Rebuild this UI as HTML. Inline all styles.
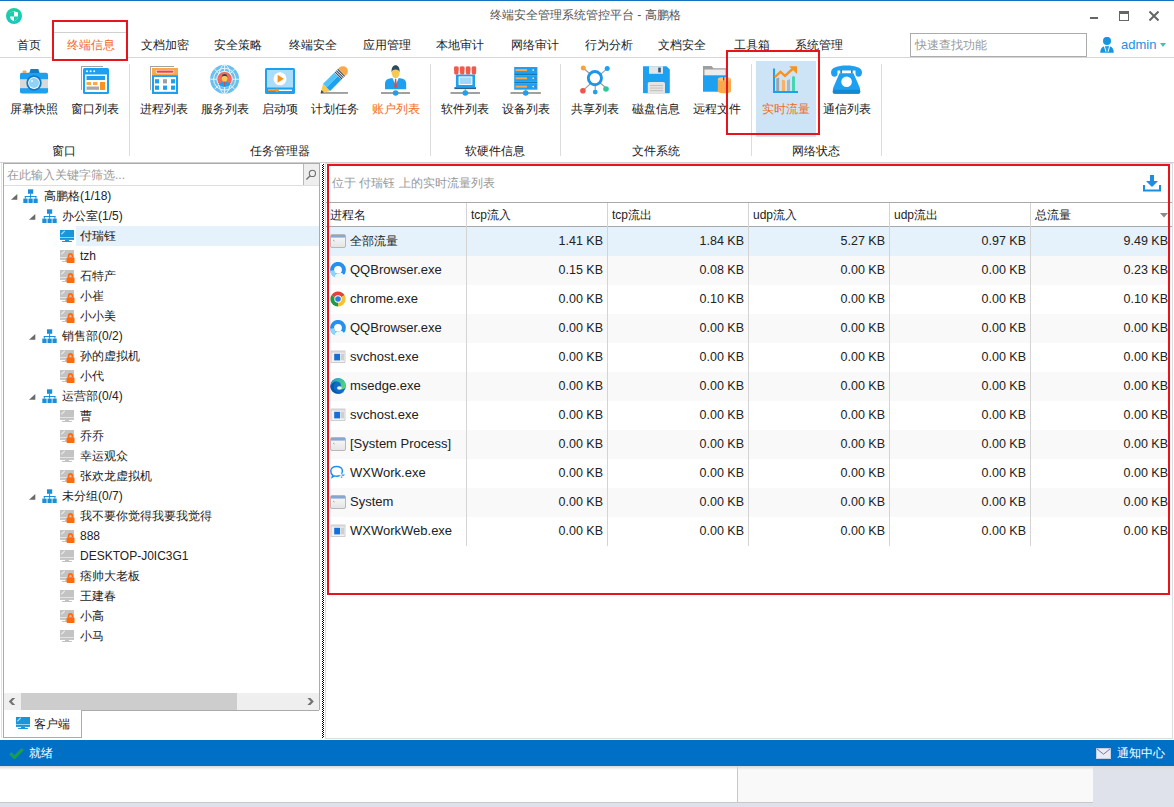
<!DOCTYPE html><html><head><meta charset="utf-8"><style>
html,body{margin:0;padding:0;}
body{width:1174px;height:807px;overflow:hidden;position:relative;background:#fff;font-family:"Liberation Sans",sans-serif;font-size:12px;color:#333;}
body>div,body>svg{position:absolute;}
.t{white-space:nowrap;line-height:16px;height:16px;}
</style></head><body>
<div style="left:0px;top:0px;width:1174px;height:1px;background:#1770c4"></div>
<svg style="left:6px;top:8px" width="16" height="16" viewBox="0 0 16 16"><defs><linearGradient id="lg" x1="0" y1="0" x2="0" y2="1"><stop offset="0" stop-color="#1ed09c"/><stop offset="1" stop-color="#19c6c4"/></linearGradient></defs><circle cx="8" cy="8" r="8" fill="url(#lg)"/><path d="M8 3.2 L12 4.4 V8.4 C12 10.8 10.2 12.4 8 13.2 C5.8 12.4 4 10.8 4 8.4 V4.4 Z" fill="#fff"/><path d="M8 3.2 V8.4 H4 V4.4Z M8 8.4 H12 C12 10.8 10.2 12.4 8 13.2Z" fill="#1ccda6"/></svg>
<div class="t" style="left:490px;top:7px;color:#555">终端安全管理系统管控平台 - 高鹏格</div>
<div style="left:1090px;top:17px;width:8px;height:2px;background:#666"></div>
<div style="left:1119px;top:11px;width:8px;height:6px;border:1px solid #666;border-top:3px solid #666"></div>
<svg style="left:1149px;top:11px" width="10" height="10" viewBox="0 0 10 10"><path d="M0.5 0.5 L9.5 9.5 M9.5 0.5 L0.5 9.5" stroke="#666" stroke-width="2"/></svg>
<div style="left:0px;top:57px;width:1174px;height:1px;background:#d6d6d6"></div>
<div style="left:53px;top:32px;width:73px;height:26px;border:1px solid #d0d0d0;border-bottom:none;background:#fff"></div>
<div class="t" style="left:17px;top:37px;color:#222">首页</div>
<div class="t" style="left:67px;top:37px;color:#f26b1d">终端信息</div>
<div class="t" style="left:141px;top:37px;color:#222">文档加密</div>
<div class="t" style="left:214px;top:37px;color:#222">安全策略</div>
<div class="t" style="left:289px;top:37px;color:#222">终端安全</div>
<div class="t" style="left:363px;top:37px;color:#222">应用管理</div>
<div class="t" style="left:436px;top:37px;color:#222">本地审计</div>
<div class="t" style="left:511px;top:37px;color:#222">网络审计</div>
<div class="t" style="left:585px;top:37px;color:#222">行为分析</div>
<div class="t" style="left:658px;top:37px;color:#222">文档安全</div>
<div class="t" style="left:734px;top:37px;color:#222">工具箱</div>
<div class="t" style="left:795px;top:37px;color:#222">系统管理</div>
<div style="left:910px;top:33px;width:175px;height:22px;border:1px solid #ababab;background:#fff"></div>
<div class="t" style="left:915px;top:37px;color:#999">快速查找功能</div>
<svg style="left:1100px;top:37px" width="15" height="16" viewBox="0 0 15 16"><circle cx="7" cy="3.9" r="4" fill="#1795de"/><path d="M0.2 15.8 C0.2 12 2 10 4.2 9.3 H9.8 C12 10 13.8 12 13.8 15.8Z" fill="#1795de"/><path d="M4.3 9 L6 14.8 M9.7 9 L8 14.8" stroke="#fff" stroke-width="1"/><rect x="6.4" y="10.4" width="1.2" height="4.2" fill="#3aa8ea"/></svg>
<div class="t" style="left:1121px;top:37px;color:#1e8fe0;font-size:13px">admin</div>
<svg style="left:1160px;top:43px" width="6" height="4" viewBox="0 0 6 4"><path d="M0 0 H6 L3 4Z" fill="#3ac4b8"/></svg>
<div style="left:129px;top:64px;width:1px;height:92px;background:#dcdcdc"></div>
<div style="left:430px;top:64px;width:1px;height:92px;background:#dcdcdc"></div>
<div style="left:560px;top:64px;width:1px;height:92px;background:#dcdcdc"></div>
<div style="left:751px;top:64px;width:1px;height:92px;background:#dcdcdc"></div>
<div style="left:881px;top:64px;width:1px;height:92px;background:#dcdcdc"></div>
<div style="left:756px;top:61px;width:60px;height:76px;background:#cde4f7"></div>
<div class="t" style="left:10px;top:101px;color:#222">屏幕快照</div>
<div class="t" style="left:71px;top:101px;color:#222">窗口列表</div>
<div class="t" style="left:140px;top:101px;color:#222">进程列表</div>
<div class="t" style="left:201px;top:101px;color:#222">服务列表</div>
<div class="t" style="left:262px;top:101px;color:#222">启动项</div>
<div class="t" style="left:311px;top:101px;color:#222">计划任务</div>
<div class="t" style="left:372px;top:101px;color:#f26b1d">账户列表</div>
<div class="t" style="left:441px;top:101px;color:#222">软件列表</div>
<div class="t" style="left:502px;top:101px;color:#222">设备列表</div>
<div class="t" style="left:571px;top:101px;color:#222">共享列表</div>
<div class="t" style="left:632px;top:101px;color:#222">磁盘信息</div>
<div class="t" style="left:693px;top:101px;color:#222">远程文件</div>
<div class="t" style="left:762px;top:101px;color:#f26b1d">实时流量</div>
<div class="t" style="left:823px;top:101px;color:#222">通信列表</div>
<div class="t" style="left:52px;top:143px;color:#222">窗口</div>
<div class="t" style="left:250px;top:143px;color:#222">任务管理器</div>
<div class="t" style="left:465px;top:143px;color:#222">软硬件信息</div>
<div class="t" style="left:632px;top:143px;color:#222">文件系统</div>
<div class="t" style="left:792px;top:143px;color:#222">网络状态</div>
<svg style="left:18px;top:64px" width="32" height="32" viewBox="0 0 32 32"><rect x="2" y="8.8" width="28" height="20.8" rx="1.8" fill="#1ea0f0"/>
<rect x="2" y="15.2" width="28" height="9" fill="#d9d9d9"/>
<path d="M11.3 8.9 L12.6 5 H20.3 L21.6 8.9Z" fill="#0e7fc6"/>
<rect x="4.5" y="6.6" width="4" height="2.4" rx="1.1" fill="#f5a55a"/>
<circle cx="16" cy="19" r="7.7" fill="#0f7cc3"/><circle cx="16" cy="19" r="5.9" fill="#fff"/><circle cx="16" cy="19" r="5" fill="#8fd3f7"/>
<circle cx="14" cy="17" r="1.1" fill="#fff" opacity=".8"/></svg>
<svg style="left:79px;top:64px" width="32" height="32" viewBox="0 0 32 32"><rect x="2" y="2" width="22" height="24" fill="#a3a3a3"/><rect x="3" y="3" width="22" height="24" fill="#fff"/>
<rect x="4" y="4" width="26" height="26" rx="1.5" fill="#1ea0f0"/>
<rect x="6" y="10.5" width="22" height="17.5" fill="#fff"/>
<circle cx="8" cy="7.2" r="1" fill="#fff"/><circle cx="11.6" cy="7.2" r="1" fill="#fff"/><circle cx="15.2" cy="7.2" r="1" fill="#fff"/>
<rect x="7.5" y="12" width="18.5" height="4" fill="#1ea0f0"/>
<rect x="7.5" y="18" width="4.5" height="3" fill="#f9a94b"/><rect x="14" y="18" width="4.5" height="3" fill="#f9a94b"/>
<rect x="21" y="18" width="5" height="8" fill="#f7931e"/>
<rect x="7.5" y="22.5" width="12.5" height="3.3" fill="#a8a8a8"/></svg>
<svg style="left:147px;top:64px" width="32" height="32" viewBox="0 0 32 32"><rect x="3" y="2" width="24" height="24" fill="#a3a3a3"/><rect x="4" y="3" width="24" height="24" fill="#fff"/>
<rect x="5" y="4" width="26" height="26" fill="#1ea0f0"/>
<rect x="5" y="4" width="26" height="7.2" fill="#f9a94b"/>
<rect x="8.7" y="5.9" width="18.6" height="3.6" rx="1.8" fill="#fff"/><rect x="9.5" y="6.6" width="17" height="2.2" rx="1.1" fill="#e8463c"/>
<rect x="7" y="13" width="22" height="14.8" fill="#fff"/>
<rect x="8" y="15.2" width="4" height="4.2" fill="#1ea0f0"/><rect x="16" y="15.2" width="4" height="4.2" fill="#a0a0a0"/><rect x="24" y="15.2" width="4" height="4.2" fill="#1ea0f0"/>
<rect x="8" y="21.6" width="4" height="4.2" fill="#1ea0f0"/><rect x="16" y="21.6" width="4" height="4.2" fill="#1ea0f0"/><rect x="24" y="21.6" width="4" height="4.2" fill="#1ea0f0"/></svg>
<svg style="left:209px;top:64px" width="32" height="32" viewBox="0 0 32 32"><circle cx="15.6" cy="15.2" r="14.5" fill="#6cbfee"/>
<g stroke="#e8f6fd" stroke-width="1" fill="none"><circle cx="15.6" cy="15.2" r="11"/><ellipse cx="15.6" cy="15.2" rx="6" ry="14.5"/>
<line x1="15.6" y1="0.7" x2="15.6" y2="29.7"/><line x1="1.1" y1="15.2" x2="30.1" y2="15.2"/>
<line x1="5.4" y1="5" x2="25.8" y2="25.4"/><line x1="25.8" y1="5" x2="5.4" y2="25.4"/></g>
<circle cx="15.6" cy="15.2" r="7.8" fill="#f26a5a" stroke="#e8f6fd" stroke-width="1"/>
<path d="M9.6 20.5 C10.6 18.6 12.6 17.8 15.6 17.8 C18.6 17.8 20.6 18.6 21.6 20.5 C20 22.2 17.9 23 15.6 23 C13.3 23 11.2 22.2 9.6 20.5Z" fill="#1ea0f0"/>
<path d="M15 17.8 H16.2 L16 22 H15.2Z" fill="#e8463c"/>
<ellipse cx="15.6" cy="14.2" rx="2.8" ry="3.4" fill="#f9c851"/>
<path d="M12.8 13.6 C12.6 10.9 14 10 15.6 10 C17.3 10 18.6 10.9 18.4 13.6 C18 12.3 17 12 15.6 12 C14.2 12 13.2 12.3 12.8 13.6Z" fill="#2e4a5e"/></svg>
<svg style="left:264px;top:64px" width="32" height="32" viewBox="0 0 32 32"><rect x="1" y="4" width="30" height="26" rx="1.5" fill="#1ea0f0"/>
<rect x="3" y="6" width="26" height="17.5" fill="#a9ddf9"/>
<circle cx="16" cy="14.8" r="6.5" fill="#fff"/>
<path d="M13.6 10.8 V18.8 L19.8 14.8Z" fill="#f7931e"/>
<rect x="4" y="25.6" width="24" height="1.4" fill="#fff"/><rect x="4" y="25.6" width="9" height="1.4" fill="#f7931e"/><circle cx="13" cy="26.3" r="1.9" fill="#f7931e"/></svg>
<svg style="left:318px;top:64px" width="32" height="32" viewBox="0 0 32 32"><rect x="3" y="28" width="27" height="1.9" fill="#a0a0a0"/>
<g transform="translate(2.6 29.4) rotate(-45)">
<path d="M0 0 L8.5 -5 V5Z" fill="#f9c851"/><path d="M0 0 L3 -1.8 V1.8Z" fill="#3a4a5a"/>
<rect x="8.5" y="-5" width="16" height="5" fill="#52c3f8"/><rect x="8.5" y="0" width="16" height="5" fill="#1ea0f0"/>
<rect x="24.5" y="-5" width="5.5" height="10" fill="#fff"/>
<rect x="24.8" y="-5" width="1.1" height="10" fill="#3a4a5a"/><rect x="26.7" y="-5" width="1.1" height="10" fill="#3a4a5a"/><rect x="28.6" y="-5" width="1.1" height="10" fill="#3a4a5a"/>
<path d="M30 -5 H31.5 A5 5 0 0 1 31.5 5 H30Z" fill="#f9a94b"/>
</g></svg>
<svg style="left:380px;top:64px" width="32" height="32" viewBox="0 0 32 32"><rect x="1" y="28" width="29" height="2" fill="#a0a0a0"/>
<path d="M5 25.3 V19.2 C5 16.3 7 15 9.8 14.4 L15.6 13.6 L21.4 14.4 C24.2 15 26.2 16.3 26.2 19.2 V25.3Z" fill="#1ea0f0"/>
<path d="M12.4 14 L15.6 21 L18.8 14Z" fill="#fff"/>
<path d="M15 14.8 H16.2 L16.9 22.5 L15.6 24.6 L14.3 22.5Z" fill="#e8463c"/>
<ellipse cx="15.6" cy="9" rx="3.9" ry="4.8" fill="#f9c851"/>
<path d="M11.6 8.4 C11.2 3.5 13.2 1.2 15.6 1.2 C18 1.2 20 3.5 19.6 8.4 C19.2 6.4 18 5.6 15.6 5.6 C13.2 5.6 12 6.4 11.6 8.4Z" fill="#2e4a5e"/>
<circle cx="15.6" cy="29" r="2.8" fill="#1ea0f0"/></svg>
<svg style="left:449px;top:64px" width="32" height="32" viewBox="0 0 32 32"><rect x="1.5" y="28" width="29.5" height="2" fill="#a0a0a0"/>
<rect x="15.8" y="24.5" width="1" height="4" fill="#a0a0a0"/>
<rect x="5.4" y="23.2" width="21.6" height="1.9" fill="#2c5f8a"/>
<rect x="6.9" y="10.5" width="19.1" height="12.8" fill="#1ea0f0"/>
<rect x="9.6" y="12.4" width="13.8" height="8.6" fill="#fff"/><rect x="10.6" y="13.4" width="11.8" height="6.6" fill="#9fd8f8"/>
<rect x="5.6" y="2.8" width="21" height="6" fill="#f3e3e3"/><rect x="5.20" y="2.6" width="4.2" height="8" rx="1.6" fill="#f05a4a"/><rect x="5.20" y="2.6" width="4.2" height="4" fill="#f05a4a"/><rect x="11.10" y="2.6" width="4.2" height="8" rx="1.6" fill="#f05a4a"/><rect x="11.10" y="2.6" width="4.2" height="4" fill="#f05a4a"/><rect x="17.00" y="2.6" width="4.2" height="8" rx="1.6" fill="#f05a4a"/><rect x="17.00" y="2.6" width="4.2" height="4" fill="#f05a4a"/><rect x="22.90" y="2.6" width="4.2" height="8" rx="1.6" fill="#f05a4a"/><rect x="22.90" y="2.6" width="4.2" height="4" fill="#f05a4a"/>
<circle cx="16.3" cy="29" r="2.8" fill="#1ea0f0"/></svg>
<svg style="left:510px;top:64px" width="32" height="32" viewBox="0 0 32 32"><rect x="0.5" y="28" width="30.4" height="2" fill="#a0a0a0"/>
<rect x="15.2" y="25.5" width="1" height="3" fill="#a0a0a0"/>
<rect x="4.2" y="3" width="23.2" height="6.2" fill="#1ea0f0"/><rect x="5.6" y="5.1" width="11.5" height="2" fill="#f9a94b"/><circle cx="23.2" cy="6.1" r="0.8" fill="#fff"/><circle cx="25.5" cy="6.1" r="0.8" fill="#e8463c"/><rect x="4.2" y="11.2" width="23.2" height="6.2" fill="#1ea0f0"/><rect x="5.6" y="13.299999999999999" width="11.5" height="2" fill="#f9a94b"/><circle cx="23.2" cy="14.299999999999999" r="0.8" fill="#fff"/><circle cx="25.5" cy="14.299999999999999" r="0.8" fill="#e8463c"/><rect x="4.2" y="19.5" width="23.2" height="6.2" fill="#1ea0f0"/><rect x="5.6" y="21.6" width="11.5" height="2" fill="#f9a94b"/><circle cx="23.2" cy="22.6" r="0.8" fill="#fff"/><circle cx="25.5" cy="22.6" r="0.8" fill="#e8463c"/><rect x="4.2" y="9.2" width="23.2" height="2" fill="#1579b8"/><rect x="4.2" y="17.4" width="23.2" height="2.1" fill="#1579b8"/>
<circle cx="15.7" cy="29" r="2.8" fill="#1ea0f0"/></svg>
<svg style="left:579px;top:64px" width="32" height="32" viewBox="0 0 32 32"><g stroke="#9a9a9a" stroke-width="1.1"><line x1="4.3" y1="4" x2="28.2" y2="25"/><line x1="28.2" y1="4.4" x2="3.9" y2="26.7"/><line x1="16.2" y1="14.1" x2="16.2" y2="28"/></g>
<circle cx="15.9" cy="14.1" r="6.6" fill="#fff" stroke="#1e96e8" stroke-width="2.9"/>
<circle cx="4.3" cy="4" r="2.5" fill="#f7a13a"/><circle cx="28.2" cy="4.4" r="2.5" fill="#1ea0f0"/>
<circle cx="3.9" cy="26.7" r="2.8" fill="#f0554a"/><circle cx="16.2" cy="28.1" r="2.4" fill="#1ea0f0"/><circle cx="27" cy="25" r="2.8" fill="#2ec89a"/></svg>
<svg style="left:640px;top:64px" width="32" height="32" viewBox="0 0 32 32"><path d="M3 2.2 H26.5 L29.8 5.5 V28.4 Q29.8 29.2 29 29.2 H3.8 Q3 29.2 3 28.4Z" fill="#1ea0f0"/>
<rect x="9" y="2.2" width="14" height="7.6" fill="#e4e4e4"/><rect x="18.2" y="3.6" width="2.6" height="4.8" fill="#3a5a78"/>
<path d="M7.8 29.2 V19.5 Q7.8 18 9.3 18 H23.5 Q25 18 25 19.5 V29.2Z" fill="#e4e4e4"/>
<rect x="10" y="21" width="13" height="0.9" fill="#bdbdbd"/><rect x="10" y="23.6" width="13" height="0.9" fill="#bdbdbd"/><rect x="10" y="26.2" width="13" height="0.9" fill="#bdbdbd"/></svg>
<svg style="left:701px;top:64px" width="32" height="32" viewBox="0 0 32 32"><path d="M2 2 H10.5 L12.5 4.2 H26 V14 H2Z" fill="#9e9e9e"/>
<rect x="3.5" y="5.5" width="21" height="8" fill="#ececec"/>
<rect x="2" y="11.3" width="24" height="16.4" fill="#1ea0f0"/>
<rect x="16.8" y="15" width="13.2" height="12.2" fill="#f9a94b"/>
<ellipse cx="23.4" cy="27.2" rx="6.6" ry="2.1" fill="#f9a94b"/>
<ellipse cx="23.4" cy="15" rx="6.6" ry="2.1" fill="#fbbf79"/>
<rect x="22" y="13" width="1.3" height="3.5" fill="#7a5a3a"/></svg>
<svg style="left:770px;top:64px" width="32" height="32" viewBox="0 0 32 32"><rect x="3" y="4.5" width="2" height="24.5" fill="#1ea0f0"/><rect x="3" y="27" width="25" height="2" fill="#1ea0f0"/>
<path d="M6.2 27 V14.6 L9.2 13.4 V27Z" fill="#9fa3a8"/><path d="M11.9 27 V15.4 L15 16.6 V27Z" fill="#fbb062"/>
<path d="M17 27 V16.4 L20 15 V27Z" fill="#a9b6c6"/><path d="M22 27 V13 L23.5 11.8 L25 13 V27Z" fill="#45d6b4"/>
<polyline points="4.8,13.2 10.5,7.8 15,11.8 22.5,5" stroke="#f7931e" stroke-width="2.4" fill="none"/>
<path d="M19.2 2.2 H27 V10Z" fill="#f7931e"/></svg>
<svg style="left:830px;top:64px" width="34" height="32" viewBox="0 0 34 32"><path d="M1 8.5 C1 3.5 7.5 1.5 16.5 1.5 C25.5 1.5 32 3.5 32 8.5 C32 11.2 30.5 12.8 28.5 12.8 C26.5 12.8 25.5 11.2 25.5 9.5 V6.4 H7.5 V9.5 C7.5 11.2 6.5 12.8 4.5 12.8 C2.5 12.8 1 11.2 1 8.5Z" fill="#1ea0f0"/>
<rect x="10.4" y="6" width="1.5" height="3.6" fill="#1579b8"/><rect x="21.1" y="6" width="1.5" height="3.6" fill="#1579b8"/>
<path d="M9.5 9.3 H23.5 L29.5 23 C30.5 25.5 30.5 29.7 28.5 29.7 H4.5 C2.5 29.7 2.5 25.5 3.5 23Z" fill="#1ea0f0"/>
<rect x="2.6" y="25.7" width="27.8" height="4" rx="2" fill="#1488d0"/>
<circle cx="16.6" cy="17.7" r="5.3" fill="#fff"/></svg>
<div style="left:0px;top:162px;width:1174px;height:1px;background:#d0d0d0"></div>
<div style="left:1px;top:163px;width:1px;height:575px;background:#e2e2e2"></div>
<div style="left:3px;top:163px;width:316px;height:547px;border-left:1px solid #ababab;border-top:1px solid #ababab;border-right:1px solid #ababab;border-bottom:1px solid #ababab;box-sizing:border-box;width:317px"></div>
<div style="left:4px;top:185px;width:315px;height:1px;background:#dedede"></div>
<div class="t" style="left:7px;top:167px;color:#999">在此输入关键字筛选...</div>
<div style="left:303px;top:164px;width:16px;height:21px;background:#eeeeee;border-left:1px solid #b8b8b8;box-sizing:border-box"></div>
<svg style="left:305px;top:167px" width="13" height="14" viewBox="0 0 13 14"><circle cx="7.4" cy="6.4" r="3.1" stroke="#707070" stroke-width="1.1" fill="none"/><line x1="5.2" y1="8.7" x2="1.4" y2="12.5" stroke="#707070" stroke-width="1.3"/></svg>
<svg style="left:11px;top:194px" width="7" height="6" viewBox="0 0 7 6"><path d="M6.3 0 V5.8 H0Z" fill="#6a6a6a"/></svg>
<svg style="left:23.0px;top:189px" width="15" height="14" viewBox="0 0 15 14"><rect x="5" y="0.3" width="5.2" height="4.5" fill="#1a8fd8"/><rect x="7.1" y="4.8" width="1" height="2.4" fill="#1a8fd8"/><rect x="1.8" y="7" width="11.6" height="1" fill="#1a8fd8"/><rect x="1.8" y="7" width="1" height="2.6" fill="#1a8fd8"/><rect x="7.1" y="7" width="1" height="2.6" fill="#1a8fd8"/><rect x="12.4" y="7" width="1" height="2.6" fill="#1a8fd8"/><rect x="0.3" y="9.6" width="4.3" height="4.4" fill="#1a8fd8"/><rect x="5.5" y="9.6" width="4.2" height="4.4" fill="#1a8fd8"/><rect x="10.5" y="9.6" width="4.2" height="4.4" fill="#1a8fd8"/></svg>
<div class="t" style="left:44px;top:188px;color:#222">高鹏格(1/18)</div>
<svg style="left:29px;top:214px" width="7" height="6" viewBox="0 0 7 6"><path d="M6.3 0 V5.8 H0Z" fill="#6a6a6a"/></svg>
<svg style="left:41.5px;top:209px" width="15" height="14" viewBox="0 0 15 14"><rect x="5" y="0.3" width="5.2" height="4.5" fill="#1a8fd8"/><rect x="7.1" y="4.8" width="1" height="2.4" fill="#1a8fd8"/><rect x="1.8" y="7" width="11.6" height="1" fill="#1a8fd8"/><rect x="1.8" y="7" width="1" height="2.6" fill="#1a8fd8"/><rect x="7.1" y="7" width="1" height="2.6" fill="#1a8fd8"/><rect x="12.4" y="7" width="1" height="2.6" fill="#1a8fd8"/><rect x="0.3" y="9.6" width="4.3" height="4.4" fill="#1a8fd8"/><rect x="5.5" y="9.6" width="4.2" height="4.4" fill="#1a8fd8"/><rect x="10.5" y="9.6" width="4.2" height="4.4" fill="#1a8fd8"/></svg>
<div class="t" style="left:62px;top:208px;color:#222">办公室(1/5)</div>
<div style="left:76px;top:226px;width:243px;height:20px;background:#e5f1fb"></div>
<svg style="left:60px;top:230px" width="14" height="13" viewBox="0 0 14 13"><rect x="0" y="0" width="14" height="7" fill="#1995dc"/><rect x="0" y="7" width="14" height="1" fill="#1995dc" opacity=".45"/><rect x="0" y="8" width="14" height="1.9" fill="#1995dc"/><rect x="5" y="9.8" width="4" height="1.2" fill="#1995dc"/><rect x="2" y="10.9" width="10" height="1.1" rx="0.5" fill="#1995dc"/><path d="M1.6 3.9 L4.4 1.3" stroke="#fff" stroke-width="1.3" stroke-linecap="round" opacity=".6"/></svg>
<div class="t" style="left:80px;top:228px;color:#222">付瑞钰</div>
<svg style="left:60px;top:250px" width="16" height="18" viewBox="0 0 16 18"><rect x="0" y="0" width="14" height="7" fill="#c3c3c3"/><rect x="0" y="7" width="14" height="1" fill="#c3c3c3" opacity=".45"/><rect x="0" y="8" width="14" height="1.9" fill="#c3c3c3"/><rect x="5" y="9.8" width="4" height="1.2" fill="#c3c3c3"/><rect x="2" y="10.9" width="10" height="1.1" rx="0.5" fill="#c3c3c3"/><path d="M1.6 3.9 L4.4 1.3" stroke="#fff" stroke-width="1.3" stroke-linecap="round" opacity=".6"/><path d="M8.6 7.4 V6.2 C8.6 4.7 9.4 3.9 10.5 3.9 C11.6 3.9 12.4 4.7 12.4 6.2 V7.4" stroke="#ff6a0d" stroke-width="1.6" fill="none"/><rect x="6.6" y="7.3" width="7.9" height="5.8" rx="1.2" fill="#ff6a0d"/></svg>
<div class="t" style="left:80px;top:248px;color:#222">tzh</div>
<svg style="left:60px;top:270px" width="16" height="18" viewBox="0 0 16 18"><rect x="0" y="0" width="14" height="7" fill="#c3c3c3"/><rect x="0" y="7" width="14" height="1" fill="#c3c3c3" opacity=".45"/><rect x="0" y="8" width="14" height="1.9" fill="#c3c3c3"/><rect x="5" y="9.8" width="4" height="1.2" fill="#c3c3c3"/><rect x="2" y="10.9" width="10" height="1.1" rx="0.5" fill="#c3c3c3"/><path d="M1.6 3.9 L4.4 1.3" stroke="#fff" stroke-width="1.3" stroke-linecap="round" opacity=".6"/><path d="M8.6 7.4 V6.2 C8.6 4.7 9.4 3.9 10.5 3.9 C11.6 3.9 12.4 4.7 12.4 6.2 V7.4" stroke="#ff6a0d" stroke-width="1.6" fill="none"/><rect x="6.6" y="7.3" width="7.9" height="5.8" rx="1.2" fill="#ff6a0d"/></svg>
<div class="t" style="left:80px;top:268px;color:#222">石特产</div>
<svg style="left:60px;top:290px" width="16" height="18" viewBox="0 0 16 18"><rect x="0" y="0" width="14" height="7" fill="#c3c3c3"/><rect x="0" y="7" width="14" height="1" fill="#c3c3c3" opacity=".45"/><rect x="0" y="8" width="14" height="1.9" fill="#c3c3c3"/><rect x="5" y="9.8" width="4" height="1.2" fill="#c3c3c3"/><rect x="2" y="10.9" width="10" height="1.1" rx="0.5" fill="#c3c3c3"/><path d="M1.6 3.9 L4.4 1.3" stroke="#fff" stroke-width="1.3" stroke-linecap="round" opacity=".6"/><path d="M8.6 7.4 V6.2 C8.6 4.7 9.4 3.9 10.5 3.9 C11.6 3.9 12.4 4.7 12.4 6.2 V7.4" stroke="#ff6a0d" stroke-width="1.6" fill="none"/><rect x="6.6" y="7.3" width="7.9" height="5.8" rx="1.2" fill="#ff6a0d"/></svg>
<div class="t" style="left:80px;top:288px;color:#222">小崔</div>
<svg style="left:60px;top:310px" width="16" height="18" viewBox="0 0 16 18"><rect x="0" y="0" width="14" height="7" fill="#c3c3c3"/><rect x="0" y="7" width="14" height="1" fill="#c3c3c3" opacity=".45"/><rect x="0" y="8" width="14" height="1.9" fill="#c3c3c3"/><rect x="5" y="9.8" width="4" height="1.2" fill="#c3c3c3"/><rect x="2" y="10.9" width="10" height="1.1" rx="0.5" fill="#c3c3c3"/><path d="M1.6 3.9 L4.4 1.3" stroke="#fff" stroke-width="1.3" stroke-linecap="round" opacity=".6"/><path d="M8.6 7.4 V6.2 C8.6 4.7 9.4 3.9 10.5 3.9 C11.6 3.9 12.4 4.7 12.4 6.2 V7.4" stroke="#ff6a0d" stroke-width="1.6" fill="none"/><rect x="6.6" y="7.3" width="7.9" height="5.8" rx="1.2" fill="#ff6a0d"/></svg>
<div class="t" style="left:80px;top:308px;color:#222">小小美</div>
<svg style="left:29px;top:334px" width="7" height="6" viewBox="0 0 7 6"><path d="M6.3 0 V5.8 H0Z" fill="#6a6a6a"/></svg>
<svg style="left:41.5px;top:329px" width="15" height="14" viewBox="0 0 15 14"><rect x="5" y="0.3" width="5.2" height="4.5" fill="#1a8fd8"/><rect x="7.1" y="4.8" width="1" height="2.4" fill="#1a8fd8"/><rect x="1.8" y="7" width="11.6" height="1" fill="#1a8fd8"/><rect x="1.8" y="7" width="1" height="2.6" fill="#1a8fd8"/><rect x="7.1" y="7" width="1" height="2.6" fill="#1a8fd8"/><rect x="12.4" y="7" width="1" height="2.6" fill="#1a8fd8"/><rect x="0.3" y="9.6" width="4.3" height="4.4" fill="#1a8fd8"/><rect x="5.5" y="9.6" width="4.2" height="4.4" fill="#1a8fd8"/><rect x="10.5" y="9.6" width="4.2" height="4.4" fill="#1a8fd8"/></svg>
<div class="t" style="left:62px;top:328px;color:#222">销售部(0/2)</div>
<svg style="left:60px;top:350px" width="16" height="18" viewBox="0 0 16 18"><rect x="0" y="0" width="14" height="7" fill="#c3c3c3"/><rect x="0" y="7" width="14" height="1" fill="#c3c3c3" opacity=".45"/><rect x="0" y="8" width="14" height="1.9" fill="#c3c3c3"/><rect x="5" y="9.8" width="4" height="1.2" fill="#c3c3c3"/><rect x="2" y="10.9" width="10" height="1.1" rx="0.5" fill="#c3c3c3"/><path d="M1.6 3.9 L4.4 1.3" stroke="#fff" stroke-width="1.3" stroke-linecap="round" opacity=".6"/><path d="M8.6 7.4 V6.2 C8.6 4.7 9.4 3.9 10.5 3.9 C11.6 3.9 12.4 4.7 12.4 6.2 V7.4" stroke="#ff6a0d" stroke-width="1.6" fill="none"/><rect x="6.6" y="7.3" width="7.9" height="5.8" rx="1.2" fill="#ff6a0d"/></svg>
<div class="t" style="left:80px;top:348px;color:#222">孙的虚拟机</div>
<svg style="left:60px;top:370px" width="16" height="18" viewBox="0 0 16 18"><rect x="0" y="0" width="14" height="7" fill="#c3c3c3"/><rect x="0" y="7" width="14" height="1" fill="#c3c3c3" opacity=".45"/><rect x="0" y="8" width="14" height="1.9" fill="#c3c3c3"/><rect x="5" y="9.8" width="4" height="1.2" fill="#c3c3c3"/><rect x="2" y="10.9" width="10" height="1.1" rx="0.5" fill="#c3c3c3"/><path d="M1.6 3.9 L4.4 1.3" stroke="#fff" stroke-width="1.3" stroke-linecap="round" opacity=".6"/><path d="M8.6 7.4 V6.2 C8.6 4.7 9.4 3.9 10.5 3.9 C11.6 3.9 12.4 4.7 12.4 6.2 V7.4" stroke="#ff6a0d" stroke-width="1.6" fill="none"/><rect x="6.6" y="7.3" width="7.9" height="5.8" rx="1.2" fill="#ff6a0d"/></svg>
<div class="t" style="left:80px;top:368px;color:#222">小代</div>
<svg style="left:29px;top:394px" width="7" height="6" viewBox="0 0 7 6"><path d="M6.3 0 V5.8 H0Z" fill="#6a6a6a"/></svg>
<svg style="left:41.5px;top:389px" width="15" height="14" viewBox="0 0 15 14"><rect x="5" y="0.3" width="5.2" height="4.5" fill="#1a8fd8"/><rect x="7.1" y="4.8" width="1" height="2.4" fill="#1a8fd8"/><rect x="1.8" y="7" width="11.6" height="1" fill="#1a8fd8"/><rect x="1.8" y="7" width="1" height="2.6" fill="#1a8fd8"/><rect x="7.1" y="7" width="1" height="2.6" fill="#1a8fd8"/><rect x="12.4" y="7" width="1" height="2.6" fill="#1a8fd8"/><rect x="0.3" y="9.6" width="4.3" height="4.4" fill="#1a8fd8"/><rect x="5.5" y="9.6" width="4.2" height="4.4" fill="#1a8fd8"/><rect x="10.5" y="9.6" width="4.2" height="4.4" fill="#1a8fd8"/></svg>
<div class="t" style="left:62px;top:388px;color:#222">运营部(0/4)</div>
<svg style="left:60px;top:410px" width="16" height="18" viewBox="0 0 16 18"><rect x="0" y="0" width="14" height="7" fill="#c3c3c3"/><rect x="0" y="7" width="14" height="1" fill="#c3c3c3" opacity=".45"/><rect x="0" y="8" width="14" height="1.9" fill="#c3c3c3"/><rect x="5" y="9.8" width="4" height="1.2" fill="#c3c3c3"/><rect x="2" y="10.9" width="10" height="1.1" rx="0.5" fill="#c3c3c3"/><path d="M1.6 3.9 L4.4 1.3" stroke="#fff" stroke-width="1.3" stroke-linecap="round" opacity=".6"/></svg>
<div class="t" style="left:80px;top:408px;color:#222">曹</div>
<svg style="left:60px;top:430px" width="16" height="18" viewBox="0 0 16 18"><rect x="0" y="0" width="14" height="7" fill="#c3c3c3"/><rect x="0" y="7" width="14" height="1" fill="#c3c3c3" opacity=".45"/><rect x="0" y="8" width="14" height="1.9" fill="#c3c3c3"/><rect x="5" y="9.8" width="4" height="1.2" fill="#c3c3c3"/><rect x="2" y="10.9" width="10" height="1.1" rx="0.5" fill="#c3c3c3"/><path d="M1.6 3.9 L4.4 1.3" stroke="#fff" stroke-width="1.3" stroke-linecap="round" opacity=".6"/><path d="M8.6 7.4 V6.2 C8.6 4.7 9.4 3.9 10.5 3.9 C11.6 3.9 12.4 4.7 12.4 6.2 V7.4" stroke="#ff6a0d" stroke-width="1.6" fill="none"/><rect x="6.6" y="7.3" width="7.9" height="5.8" rx="1.2" fill="#ff6a0d"/></svg>
<div class="t" style="left:80px;top:428px;color:#222">乔乔</div>
<svg style="left:60px;top:450px" width="16" height="18" viewBox="0 0 16 18"><rect x="0" y="0" width="14" height="7" fill="#c3c3c3"/><rect x="0" y="7" width="14" height="1" fill="#c3c3c3" opacity=".45"/><rect x="0" y="8" width="14" height="1.9" fill="#c3c3c3"/><rect x="5" y="9.8" width="4" height="1.2" fill="#c3c3c3"/><rect x="2" y="10.9" width="10" height="1.1" rx="0.5" fill="#c3c3c3"/><path d="M1.6 3.9 L4.4 1.3" stroke="#fff" stroke-width="1.3" stroke-linecap="round" opacity=".6"/></svg>
<div class="t" style="left:80px;top:448px;color:#222">幸运观众</div>
<svg style="left:60px;top:470px" width="16" height="18" viewBox="0 0 16 18"><rect x="0" y="0" width="14" height="7" fill="#c3c3c3"/><rect x="0" y="7" width="14" height="1" fill="#c3c3c3" opacity=".45"/><rect x="0" y="8" width="14" height="1.9" fill="#c3c3c3"/><rect x="5" y="9.8" width="4" height="1.2" fill="#c3c3c3"/><rect x="2" y="10.9" width="10" height="1.1" rx="0.5" fill="#c3c3c3"/><path d="M1.6 3.9 L4.4 1.3" stroke="#fff" stroke-width="1.3" stroke-linecap="round" opacity=".6"/><path d="M8.6 7.4 V6.2 C8.6 4.7 9.4 3.9 10.5 3.9 C11.6 3.9 12.4 4.7 12.4 6.2 V7.4" stroke="#ff6a0d" stroke-width="1.6" fill="none"/><rect x="6.6" y="7.3" width="7.9" height="5.8" rx="1.2" fill="#ff6a0d"/></svg>
<div class="t" style="left:80px;top:468px;color:#222">张欢龙虚拟机</div>
<svg style="left:29px;top:494px" width="7" height="6" viewBox="0 0 7 6"><path d="M6.3 0 V5.8 H0Z" fill="#6a6a6a"/></svg>
<svg style="left:41.5px;top:489px" width="15" height="14" viewBox="0 0 15 14"><rect x="5" y="0.3" width="5.2" height="4.5" fill="#1a8fd8"/><rect x="7.1" y="4.8" width="1" height="2.4" fill="#1a8fd8"/><rect x="1.8" y="7" width="11.6" height="1" fill="#1a8fd8"/><rect x="1.8" y="7" width="1" height="2.6" fill="#1a8fd8"/><rect x="7.1" y="7" width="1" height="2.6" fill="#1a8fd8"/><rect x="12.4" y="7" width="1" height="2.6" fill="#1a8fd8"/><rect x="0.3" y="9.6" width="4.3" height="4.4" fill="#1a8fd8"/><rect x="5.5" y="9.6" width="4.2" height="4.4" fill="#1a8fd8"/><rect x="10.5" y="9.6" width="4.2" height="4.4" fill="#1a8fd8"/></svg>
<div class="t" style="left:62px;top:488px;color:#222">未分组(0/7)</div>
<svg style="left:60px;top:510px" width="16" height="18" viewBox="0 0 16 18"><rect x="0" y="0" width="14" height="7" fill="#c3c3c3"/><rect x="0" y="7" width="14" height="1" fill="#c3c3c3" opacity=".45"/><rect x="0" y="8" width="14" height="1.9" fill="#c3c3c3"/><rect x="5" y="9.8" width="4" height="1.2" fill="#c3c3c3"/><rect x="2" y="10.9" width="10" height="1.1" rx="0.5" fill="#c3c3c3"/><path d="M1.6 3.9 L4.4 1.3" stroke="#fff" stroke-width="1.3" stroke-linecap="round" opacity=".6"/><path d="M8.6 7.4 V6.2 C8.6 4.7 9.4 3.9 10.5 3.9 C11.6 3.9 12.4 4.7 12.4 6.2 V7.4" stroke="#ff6a0d" stroke-width="1.6" fill="none"/><rect x="6.6" y="7.3" width="7.9" height="5.8" rx="1.2" fill="#ff6a0d"/></svg>
<div class="t" style="left:80px;top:508px;color:#222">我不要你觉得我要我觉得</div>
<svg style="left:60px;top:530px" width="16" height="18" viewBox="0 0 16 18"><rect x="0" y="0" width="14" height="7" fill="#c3c3c3"/><rect x="0" y="7" width="14" height="1" fill="#c3c3c3" opacity=".45"/><rect x="0" y="8" width="14" height="1.9" fill="#c3c3c3"/><rect x="5" y="9.8" width="4" height="1.2" fill="#c3c3c3"/><rect x="2" y="10.9" width="10" height="1.1" rx="0.5" fill="#c3c3c3"/><path d="M1.6 3.9 L4.4 1.3" stroke="#fff" stroke-width="1.3" stroke-linecap="round" opacity=".6"/><path d="M8.6 7.4 V6.2 C8.6 4.7 9.4 3.9 10.5 3.9 C11.6 3.9 12.4 4.7 12.4 6.2 V7.4" stroke="#ff6a0d" stroke-width="1.6" fill="none"/><rect x="6.6" y="7.3" width="7.9" height="5.8" rx="1.2" fill="#ff6a0d"/></svg>
<div class="t" style="left:80px;top:528px;color:#222">888</div>
<svg style="left:60px;top:550px" width="16" height="18" viewBox="0 0 16 18"><rect x="0" y="0" width="14" height="7" fill="#c3c3c3"/><rect x="0" y="7" width="14" height="1" fill="#c3c3c3" opacity=".45"/><rect x="0" y="8" width="14" height="1.9" fill="#c3c3c3"/><rect x="5" y="9.8" width="4" height="1.2" fill="#c3c3c3"/><rect x="2" y="10.9" width="10" height="1.1" rx="0.5" fill="#c3c3c3"/><path d="M1.6 3.9 L4.4 1.3" stroke="#fff" stroke-width="1.3" stroke-linecap="round" opacity=".6"/></svg>
<div class="t" style="left:80px;top:548px;color:#222">DESKTOP-J0IC3G1</div>
<svg style="left:60px;top:570px" width="16" height="18" viewBox="0 0 16 18"><rect x="0" y="0" width="14" height="7" fill="#c3c3c3"/><rect x="0" y="7" width="14" height="1" fill="#c3c3c3" opacity=".45"/><rect x="0" y="8" width="14" height="1.9" fill="#c3c3c3"/><rect x="5" y="9.8" width="4" height="1.2" fill="#c3c3c3"/><rect x="2" y="10.9" width="10" height="1.1" rx="0.5" fill="#c3c3c3"/><path d="M1.6 3.9 L4.4 1.3" stroke="#fff" stroke-width="1.3" stroke-linecap="round" opacity=".6"/><path d="M8.6 7.4 V6.2 C8.6 4.7 9.4 3.9 10.5 3.9 C11.6 3.9 12.4 4.7 12.4 6.2 V7.4" stroke="#ff6a0d" stroke-width="1.6" fill="none"/><rect x="6.6" y="7.3" width="7.9" height="5.8" rx="1.2" fill="#ff6a0d"/></svg>
<div class="t" style="left:80px;top:568px;color:#222">痞帅大老板</div>
<svg style="left:60px;top:590px" width="16" height="18" viewBox="0 0 16 18"><rect x="0" y="0" width="14" height="7" fill="#c3c3c3"/><rect x="0" y="7" width="14" height="1" fill="#c3c3c3" opacity=".45"/><rect x="0" y="8" width="14" height="1.9" fill="#c3c3c3"/><rect x="5" y="9.8" width="4" height="1.2" fill="#c3c3c3"/><rect x="2" y="10.9" width="10" height="1.1" rx="0.5" fill="#c3c3c3"/><path d="M1.6 3.9 L4.4 1.3" stroke="#fff" stroke-width="1.3" stroke-linecap="round" opacity=".6"/></svg>
<div class="t" style="left:80px;top:588px;color:#222">王建春</div>
<svg style="left:60px;top:610px" width="16" height="18" viewBox="0 0 16 18"><rect x="0" y="0" width="14" height="7" fill="#c3c3c3"/><rect x="0" y="7" width="14" height="1" fill="#c3c3c3" opacity=".45"/><rect x="0" y="8" width="14" height="1.9" fill="#c3c3c3"/><rect x="5" y="9.8" width="4" height="1.2" fill="#c3c3c3"/><rect x="2" y="10.9" width="10" height="1.1" rx="0.5" fill="#c3c3c3"/><path d="M1.6 3.9 L4.4 1.3" stroke="#fff" stroke-width="1.3" stroke-linecap="round" opacity=".6"/><path d="M8.6 7.4 V6.2 C8.6 4.7 9.4 3.9 10.5 3.9 C11.6 3.9 12.4 4.7 12.4 6.2 V7.4" stroke="#ff6a0d" stroke-width="1.6" fill="none"/><rect x="6.6" y="7.3" width="7.9" height="5.8" rx="1.2" fill="#ff6a0d"/></svg>
<div class="t" style="left:80px;top:608px;color:#222">小高</div>
<svg style="left:60px;top:630px" width="16" height="18" viewBox="0 0 16 18"><rect x="0" y="0" width="14" height="7" fill="#c3c3c3"/><rect x="0" y="7" width="14" height="1" fill="#c3c3c3" opacity=".45"/><rect x="0" y="8" width="14" height="1.9" fill="#c3c3c3"/><rect x="5" y="9.8" width="4" height="1.2" fill="#c3c3c3"/><rect x="2" y="10.9" width="10" height="1.1" rx="0.5" fill="#c3c3c3"/><path d="M1.6 3.9 L4.4 1.3" stroke="#fff" stroke-width="1.3" stroke-linecap="round" opacity=".6"/></svg>
<div class="t" style="left:80px;top:628px;color:#222">小马</div>
<div style="left:4px;top:693px;width:315px;height:17px;background:#efefef"></div>
<div style="left:21px;top:693px;width:216px;height:17px;background:#cdcdcd"></div>
<svg style="left:8px;top:697px" width="8" height="9" viewBox="0 0 8 9"><path d="M0.8 4.5 L4.2 1 H7.2 L3.8 4.5 L7.2 8 H4.2Z" fill="#727272"/></svg>
<svg style="left:306px;top:697px" width="8" height="9" viewBox="0 0 8 9"><path d="M7.8 4.5 L4.4 1 H1.4 L4.8 4.5 L1.4 8 H4.4Z" fill="#727272"/></svg>
<div style="left:3px;top:710px;width:316px;height:1px;background:#ababab"></div>
<div style="left:3px;top:710px;width:79px;height:28px;border:1px solid #ababab;border-top:none;background:#fff;box-sizing:border-box"></div>
<svg style="left:16px;top:717px" width="14" height="13" viewBox="0 0 14 13"><rect x="0" y="0" width="14" height="7" fill="#1995dc"/><rect x="0" y="7" width="14" height="1" fill="#1995dc" opacity=".45"/><rect x="0" y="8" width="14" height="1.9" fill="#1995dc"/><rect x="5" y="9.8" width="4" height="1.2" fill="#1995dc"/><rect x="2" y="10.9" width="10" height="1.1" rx="0.5" fill="#1995dc"/><path d="M1.6 3.9 L4.4 1.3" stroke="#fff" stroke-width="1.3" stroke-linecap="round" opacity=".6"/></svg>
<div class="t" style="left:34px;top:716px;color:#222">客户端</div>
<div style="left:322px;top:164px;width:2px;height:574px;background:conic-gradient(#000 25%,#fff 0 50%,#000 0 75%,#fff 0);background-size:2px 2px;"></div>
<div style="left:325px;top:163px;width:848px;height:576px;border:1px solid #dcdcdc;box-sizing:border-box;background:#fff"></div>
<div class="t" style="left:332px;top:175px;color:#999">位于 付瑞钰 上的实时流量列表</div>
<svg style="left:1143px;top:175px" width="18" height="17" viewBox="0 0 18 17"><path d="M7 0 H11 V6 H15 L9 12 L3 6 H7Z" fill="#1a8fdf"/><path d="M1 10 V15.5 H17 V10" stroke="#1a8fdf" stroke-width="2" fill="none"/></svg>
<div style="left:326px;top:202px;width:846px;height:1px;background:#a9a9a9"></div>
<div style="left:326px;top:226px;width:846px;height:1px;background:#a9a9a9"></div>
<div class="t" style="left:330px;top:207px;color:#222">进程名</div>
<div class="t" style="left:471px;top:207px;color:#222">tcp流入</div>
<div class="t" style="left:612px;top:207px;color:#222">tcp流出</div>
<div class="t" style="left:753px;top:207px;color:#222">udp流入</div>
<div class="t" style="left:894px;top:207px;color:#222">udp流出</div>
<div class="t" style="left:1035px;top:207px;color:#222">总流量</div>
<svg style="left:1160px;top:213px" width="8" height="5" viewBox="0 0 8 5"><path d="M0 0 H8 L4 4.5Z" fill="#8a8a8a"/></svg>
<div style="left:329px;top:227px;width:842px;height:29px;background:#e5f1fb"></div>
<svg style="left:330px;top:233px" width="16" height="16" viewBox="0 0 16 16"><defs><linearGradient id="ag" x1="0" y1="0" x2="0" y2="1"><stop offset="0" stop-color="#fbfbfb"/><stop offset="1" stop-color="#e4e4e4"/></linearGradient></defs><rect x="0.5" y="1.5" width="15" height="13" rx="1.5" fill="url(#ag)" stroke="#b8b8b8"/><rect x="1" y="2" width="14" height="2.6" fill="#86a6d4"/><path d="M3 7 L4.6 8.2" stroke="#999" stroke-width=".8"/></svg>
<div class="t" style="left:350px;top:233px;color:#222;font-size:12px">全部流量</div>
<div class="t" style="left:483px;top:233px;width:120px;text-align:right;color:#222;font-size:12.5px">1.41 KB</div>
<div class="t" style="left:624px;top:233px;width:120px;text-align:right;color:#222;font-size:12.5px">1.84 KB</div>
<div class="t" style="left:765px;top:233px;width:120px;text-align:right;color:#222;font-size:12.5px">5.27 KB</div>
<div class="t" style="left:906px;top:233px;width:120px;text-align:right;color:#222;font-size:12.5px">0.97 KB</div>
<div class="t" style="left:1048px;top:233px;width:120px;text-align:right;color:#222;font-size:12.5px">9.49 KB</div>
<div style="left:329px;top:256px;width:842px;height:29px;background:#f9f9f9"></div>
<svg style="left:330px;top:262px" width="16" height="16" viewBox="0 0 16 16"><circle cx="8" cy="7.8" r="5.9" fill="#fff" stroke="#2690ee" stroke-width="4"/><path d="M1.9 8.6 A5.9 5.9 0 0 0 5 13" stroke="#8ed5ff" stroke-width="4" fill="none"/><path d="M4.6 14 C5 12.2 6.8 11.4 8.6 11.8 C9.8 10.6 12.4 10.6 13.4 12.4 C15 12.5 15.8 13.6 15.6 14.8 C15.4 15.6 14.6 16 13.8 16 H5.6 C4.8 16 4.3 15 4.6 14Z" fill="#eef8ff"/></svg>
<div class="t" style="left:350px;top:262px;color:#222;font-size:13px">QQBrowser.exe</div>
<div class="t" style="left:483px;top:262px;width:120px;text-align:right;color:#222;font-size:12.5px">0.15 KB</div>
<div class="t" style="left:624px;top:262px;width:120px;text-align:right;color:#222;font-size:12.5px">0.08 KB</div>
<div class="t" style="left:765px;top:262px;width:120px;text-align:right;color:#222;font-size:12.5px">0.00 KB</div>
<div class="t" style="left:906px;top:262px;width:120px;text-align:right;color:#222;font-size:12.5px">0.00 KB</div>
<div class="t" style="left:1048px;top:262px;width:120px;text-align:right;color:#222;font-size:12.5px">0.23 KB</div>
<svg style="left:330px;top:291px" width="16" height="16" viewBox="0 0 16 16"><path d="M8 8 L1.42 4.2 A7.6 7.6 0 0 1 14.58 4.2Z" fill="#e34234"/><path d="M8 8 L14.58 4.2 A7.6 7.6 0 0 1 8 15.6Z" fill="#fbc02d"/><path d="M8 8 L8 15.6 A7.6 7.6 0 0 1 1.42 4.2Z" fill="#1e9b48"/><circle cx="8" cy="8" r="3.7" fill="#fff"/><circle cx="8" cy="8" r="2.8" fill="#2a7de1"/></svg>
<div class="t" style="left:350px;top:291px;color:#222;font-size:13px">chrome.exe</div>
<div class="t" style="left:483px;top:291px;width:120px;text-align:right;color:#222;font-size:12.5px">0.00 KB</div>
<div class="t" style="left:624px;top:291px;width:120px;text-align:right;color:#222;font-size:12.5px">0.10 KB</div>
<div class="t" style="left:765px;top:291px;width:120px;text-align:right;color:#222;font-size:12.5px">0.00 KB</div>
<div class="t" style="left:906px;top:291px;width:120px;text-align:right;color:#222;font-size:12.5px">0.00 KB</div>
<div class="t" style="left:1048px;top:291px;width:120px;text-align:right;color:#222;font-size:12.5px">0.10 KB</div>
<div style="left:329px;top:314px;width:842px;height:29px;background:#f9f9f9"></div>
<svg style="left:330px;top:320px" width="16" height="16" viewBox="0 0 16 16"><circle cx="8" cy="7.8" r="5.9" fill="#fff" stroke="#2690ee" stroke-width="4"/><path d="M1.9 8.6 A5.9 5.9 0 0 0 5 13" stroke="#8ed5ff" stroke-width="4" fill="none"/><path d="M4.6 14 C5 12.2 6.8 11.4 8.6 11.8 C9.8 10.6 12.4 10.6 13.4 12.4 C15 12.5 15.8 13.6 15.6 14.8 C15.4 15.6 14.6 16 13.8 16 H5.6 C4.8 16 4.3 15 4.6 14Z" fill="#eef8ff"/></svg>
<div class="t" style="left:350px;top:320px;color:#222;font-size:13px">QQBrowser.exe</div>
<div class="t" style="left:483px;top:320px;width:120px;text-align:right;color:#222;font-size:12.5px">0.00 KB</div>
<div class="t" style="left:624px;top:320px;width:120px;text-align:right;color:#222;font-size:12.5px">0.00 KB</div>
<div class="t" style="left:765px;top:320px;width:120px;text-align:right;color:#222;font-size:12.5px">0.00 KB</div>
<div class="t" style="left:906px;top:320px;width:120px;text-align:right;color:#222;font-size:12.5px">0.00 KB</div>
<div class="t" style="left:1048px;top:320px;width:120px;text-align:right;color:#222;font-size:12.5px">0.00 KB</div>
<svg style="left:330px;top:349px" width="16" height="16" viewBox="0 0 16 16"><rect x="1" y="2" width="14" height="11.5" fill="#f2f2f2" stroke="#c4c4c4" stroke-width="0.8"/><rect x="1" y="2" width="14" height="1.6" fill="#d4d4d4"/><rect x="4.2" y="4.8" width="5.9" height="6.6" fill="#1470d8"/><rect x="11" y="4.6" width="3" height="6.8" fill="#cfcfcf"/></svg>
<div class="t" style="left:350px;top:349px;color:#222;font-size:13px">svchost.exe</div>
<div class="t" style="left:483px;top:349px;width:120px;text-align:right;color:#222;font-size:12.5px">0.00 KB</div>
<div class="t" style="left:624px;top:349px;width:120px;text-align:right;color:#222;font-size:12.5px">0.00 KB</div>
<div class="t" style="left:765px;top:349px;width:120px;text-align:right;color:#222;font-size:12.5px">0.00 KB</div>
<div class="t" style="left:906px;top:349px;width:120px;text-align:right;color:#222;font-size:12.5px">0.00 KB</div>
<div class="t" style="left:1048px;top:349px;width:120px;text-align:right;color:#222;font-size:12.5px">0.00 KB</div>
<div style="left:329px;top:372px;width:842px;height:29px;background:#f9f9f9"></div>
<svg style="left:330px;top:378px" width="16" height="16" viewBox="0 0 16 16"><defs><linearGradient id="eg" x1="0" y1="0" x2="1" y2="0.7"><stop offset="0" stop-color="#1d9fe0"/><stop offset="1" stop-color="#5ad86a"/></linearGradient></defs><circle cx="8" cy="8" r="7.8" fill="#0f6cc8"/><path d="M0.6 8.6 C0.8 3.6 4.4 0.2 8.4 0.2 C12.6 0.2 15.8 3.4 15.8 7.6 C15.8 10.2 13.8 11.4 11.6 11.4 C10 11.4 9 10.6 9 9.6 C10.2 9.4 11 8.6 11 7.4 C11 5.2 9 3.6 6.8 3.6 C3.6 3.6 1.4 5.6 0.6 8.6Z" fill="url(#eg)"/><path d="M0.6 8.6 C1.4 5.6 3.6 3.6 6.8 3.6 C4.4 4.8 3.6 7 3.8 9.4 C4 12.6 7.2 15 10.4 14.8 C12.6 14.7 14.2 13.8 15 12.8 C13.6 14.8 11.2 15.8 8.4 15.8 C4 15.8 0.6 12.6 0.6 8.6Z" fill="#0b58a8"/><ellipse cx="9.4" cy="10" rx="2.4" ry="1.7" fill="#eaf5fb"/></svg>
<div class="t" style="left:350px;top:378px;color:#222;font-size:13px">msedge.exe</div>
<div class="t" style="left:483px;top:378px;width:120px;text-align:right;color:#222;font-size:12.5px">0.00 KB</div>
<div class="t" style="left:624px;top:378px;width:120px;text-align:right;color:#222;font-size:12.5px">0.00 KB</div>
<div class="t" style="left:765px;top:378px;width:120px;text-align:right;color:#222;font-size:12.5px">0.00 KB</div>
<div class="t" style="left:906px;top:378px;width:120px;text-align:right;color:#222;font-size:12.5px">0.00 KB</div>
<div class="t" style="left:1048px;top:378px;width:120px;text-align:right;color:#222;font-size:12.5px">0.00 KB</div>
<svg style="left:330px;top:407px" width="16" height="16" viewBox="0 0 16 16"><rect x="1" y="2" width="14" height="11.5" fill="#f2f2f2" stroke="#c4c4c4" stroke-width="0.8"/><rect x="1" y="2" width="14" height="1.6" fill="#d4d4d4"/><rect x="4.2" y="4.8" width="5.9" height="6.6" fill="#1470d8"/><rect x="11" y="4.6" width="3" height="6.8" fill="#cfcfcf"/></svg>
<div class="t" style="left:350px;top:407px;color:#222;font-size:13px">svchost.exe</div>
<div class="t" style="left:483px;top:407px;width:120px;text-align:right;color:#222;font-size:12.5px">0.00 KB</div>
<div class="t" style="left:624px;top:407px;width:120px;text-align:right;color:#222;font-size:12.5px">0.00 KB</div>
<div class="t" style="left:765px;top:407px;width:120px;text-align:right;color:#222;font-size:12.5px">0.00 KB</div>
<div class="t" style="left:906px;top:407px;width:120px;text-align:right;color:#222;font-size:12.5px">0.00 KB</div>
<div class="t" style="left:1048px;top:407px;width:120px;text-align:right;color:#222;font-size:12.5px">0.00 KB</div>
<div style="left:329px;top:430px;width:842px;height:29px;background:#f9f9f9"></div>
<svg style="left:330px;top:436px" width="16" height="16" viewBox="0 0 16 16"><defs><linearGradient id="ag" x1="0" y1="0" x2="0" y2="1"><stop offset="0" stop-color="#fbfbfb"/><stop offset="1" stop-color="#e4e4e4"/></linearGradient></defs><rect x="0.5" y="1.5" width="15" height="13" rx="1.5" fill="url(#ag)" stroke="#b8b8b8"/><rect x="1" y="2" width="14" height="2.6" fill="#86a6d4"/><path d="M3 7 L4.6 8.2" stroke="#999" stroke-width=".8"/></svg>
<div class="t" style="left:350px;top:436px;color:#222;font-size:13px">[System Process]</div>
<div class="t" style="left:483px;top:436px;width:120px;text-align:right;color:#222;font-size:12.5px">0.00 KB</div>
<div class="t" style="left:624px;top:436px;width:120px;text-align:right;color:#222;font-size:12.5px">0.00 KB</div>
<div class="t" style="left:765px;top:436px;width:120px;text-align:right;color:#222;font-size:12.5px">0.00 KB</div>
<div class="t" style="left:906px;top:436px;width:120px;text-align:right;color:#222;font-size:12.5px">0.00 KB</div>
<div class="t" style="left:1048px;top:436px;width:120px;text-align:right;color:#222;font-size:12.5px">0.00 KB</div>
<svg style="left:330px;top:465px" width="16" height="16" viewBox="0 0 16 16"><path d="M6.6 1.4 C9.8 1.4 12.4 3.3 12.4 5.9 C12.4 6.6 12.2 7.2 11.9 7.8 M10 10.4 C9 10.9 7.8 11.2 6.6 11.2 C5.8 11.2 5 11.1 4.3 10.9 L2.2 12.2 L2.6 10.2 C1.4 9.2 0.8 7.6 0.8 5.9 C0.8 3.3 3.4 1.4 6.6 1.4" fill="none" stroke="#1e8ef2" stroke-width="1.5"/><path d="M11.6 9.6 L8.8 10.4 L11.6 11.2Z" fill="#f7d31e"/><path d="M11.6 9.6 L10.6 7.2 L12.8 8.4Z" fill="#3cc24a"/><path d="M11.6 9.6 L15.2 9.6 L12.8 11.4Z" fill="#2a96f0"/><path d="M11.6 11 L12.6 13.2 L10.6 12.6Z" fill="#f06a1e"/></svg>
<div class="t" style="left:350px;top:465px;color:#222;font-size:13px">WXWork.exe</div>
<div class="t" style="left:483px;top:465px;width:120px;text-align:right;color:#222;font-size:12.5px">0.00 KB</div>
<div class="t" style="left:624px;top:465px;width:120px;text-align:right;color:#222;font-size:12.5px">0.00 KB</div>
<div class="t" style="left:765px;top:465px;width:120px;text-align:right;color:#222;font-size:12.5px">0.00 KB</div>
<div class="t" style="left:906px;top:465px;width:120px;text-align:right;color:#222;font-size:12.5px">0.00 KB</div>
<div class="t" style="left:1048px;top:465px;width:120px;text-align:right;color:#222;font-size:12.5px">0.00 KB</div>
<div style="left:329px;top:488px;width:842px;height:29px;background:#f9f9f9"></div>
<svg style="left:330px;top:494px" width="16" height="16" viewBox="0 0 16 16"><defs><linearGradient id="ag" x1="0" y1="0" x2="0" y2="1"><stop offset="0" stop-color="#fbfbfb"/><stop offset="1" stop-color="#e4e4e4"/></linearGradient></defs><rect x="0.5" y="1.5" width="15" height="13" rx="1.5" fill="url(#ag)" stroke="#b8b8b8"/><rect x="1" y="2" width="14" height="2.6" fill="#86a6d4"/><path d="M3 7 L4.6 8.2" stroke="#999" stroke-width=".8"/></svg>
<div class="t" style="left:350px;top:494px;color:#222;font-size:13px">System</div>
<div class="t" style="left:483px;top:494px;width:120px;text-align:right;color:#222;font-size:12.5px">0.00 KB</div>
<div class="t" style="left:624px;top:494px;width:120px;text-align:right;color:#222;font-size:12.5px">0.00 KB</div>
<div class="t" style="left:765px;top:494px;width:120px;text-align:right;color:#222;font-size:12.5px">0.00 KB</div>
<div class="t" style="left:906px;top:494px;width:120px;text-align:right;color:#222;font-size:12.5px">0.00 KB</div>
<div class="t" style="left:1048px;top:494px;width:120px;text-align:right;color:#222;font-size:12.5px">0.00 KB</div>
<svg style="left:330px;top:523px" width="16" height="16" viewBox="0 0 16 16"><rect x="1" y="2" width="14" height="11.5" fill="#f2f2f2" stroke="#c4c4c4" stroke-width="0.8"/><rect x="1" y="2" width="14" height="1.6" fill="#d4d4d4"/><rect x="4.2" y="4.8" width="5.9" height="6.6" fill="#1470d8"/><rect x="11" y="4.6" width="3" height="6.8" fill="#cfcfcf"/></svg>
<div class="t" style="left:350px;top:523px;color:#222;font-size:13px">WXWorkWeb.exe</div>
<div class="t" style="left:483px;top:523px;width:120px;text-align:right;color:#222;font-size:12.5px">0.00 KB</div>
<div class="t" style="left:624px;top:523px;width:120px;text-align:right;color:#222;font-size:12.5px">0.00 KB</div>
<div class="t" style="left:765px;top:523px;width:120px;text-align:right;color:#222;font-size:12.5px">0.00 KB</div>
<div class="t" style="left:906px;top:523px;width:120px;text-align:right;color:#222;font-size:12.5px">0.00 KB</div>
<div class="t" style="left:1048px;top:523px;width:120px;text-align:right;color:#222;font-size:12.5px">0.00 KB</div>
<div style="left:466px;top:203px;width:1px;height:343px;background:#d4d4d4"></div>
<div style="left:607px;top:203px;width:1px;height:343px;background:#d4d4d4"></div>
<div style="left:748px;top:203px;width:1px;height:343px;background:#d4d4d4"></div>
<div style="left:889px;top:203px;width:1px;height:343px;background:#d4d4d4"></div>
<div style="left:1030px;top:203px;width:1px;height:343px;background:#d4d4d4"></div>
<div style="left:52px;top:20px;width:76px;height:41px;border:2px solid #e8141b;box-sizing:border-box"></div>
<div style="left:726px;top:50px;width:94px;height:85px;border:2px solid #e8141b;box-sizing:border-box"></div>
<div style="left:327px;top:164px;width:843px;height:431px;border:2px solid #e8141b;box-sizing:border-box"></div>
<div style="left:0px;top:740px;width:1174px;height:26px;background:#0070c6"></div>
<svg style="left:9px;top:748px" width="15" height="11" viewBox="0 0 15 11"><path d="M1.2 5.2 L5.4 9.4 L13.8 1" stroke="#1a9e48" stroke-width="3.2" fill="none"/></svg>
<div class="t" style="left:29px;top:745px;color:#fff">就绪</div>
<svg style="left:1096px;top:748px" width="15" height="11" viewBox="0 0 15 11"><rect x="0.5" y="0.5" width="14" height="10" fill="#e8ecf4" stroke="#c8cde0"/><path d="M0.8 0.8 L7.5 6.2 L14.2 0.8" stroke="#6a6aa8" stroke-width="0.9" fill="none"/></svg>
<div class="t" style="left:1117px;top:745px;color:#fff">通知中心</div>
<div style="left:0;top:766px;width:1174px;height:41px;background:#dfe2ea"></div>
<div style="left:0px;top:766px;width:737px;height:36px;background:#fff"></div>
<div style="left:737px;top:766px;width:1px;height:36px;background:#c8c8c8"></div>
<div style="left:738px;top:766px;width:355px;height:36px;background:#f9f9f9"></div>
<div style="left:0;top:766px;width:1174px;height:4px;background:linear-gradient(#d8d8d8,rgba(255,255,255,0))"></div>
<div style="left:0px;top:802px;width:1093px;height:1px;background:#c8c8cc"></div>
</body></html>
